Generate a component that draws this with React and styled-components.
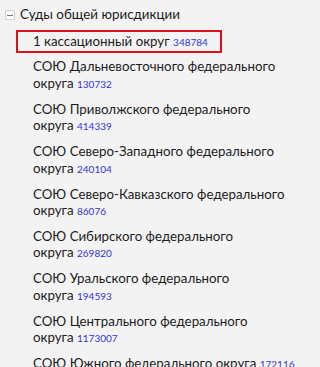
import React from "react";
import styled, { createGlobalStyle } from "styled-components";

const Global = createGlobalStyle`
  html, body { margin: 0; padding: 0; background: #f3f3f3; overflow: hidden; }
  body { font-family: Lato, "Noto Sans", sans-serif; color: #1c1c1c; }
`;

const Tree = styled.div`
  width: 300px;
  height: 367px;
  overflow: hidden;
  box-sizing: border-box;
  padding: 5px 0 0 5px;
`;

const Header = styled.div`
  display: flex;
  align-items: center;
  gap: 5px;
  height: 19px;
`;

const Toggle = styled.span`
  box-sizing: border-box;
  flex: none;
  width: 10px;
  height: 10px;
  margin-top: 1px;
  border: 1px solid #d6d6d6;
  background: #fbfbfb;
  display: flex;
  align-items: center;
  justify-content: center;
  &::before {
    content: "";
    width: 6px;
    height: 1px;
    background: #7a7a7a;
  }
`;

const Title = styled.span`
  font-size: 13.4px;
  line-height: 19px;
  white-space: nowrap;
`;

const List = styled.ul`
  list-style: none;
  margin: 5.5px 0 0 11px;
  padding: 0;
  display: flex;
  flex-direction: column;
  align-items: flex-start;
  gap: 2.4px;
`;

const Item = styled.li`
  box-sizing: border-box;
  width: max-content;
  max-width: 300px;
  flex: none;
  padding: 1px 12px 1px 15px;
  border: 2px solid ${(p) => (p.$selected ? "#d8111b" : "transparent")};
  font-size: 13.3px;
  line-height: 16.5px;
`;

const Tail = styled.span`
  white-space: nowrap;
`;

const Count = styled.span`
  font-size: 10px;
  color: #3434d2;
`;

const courts = [
  { name: "1 кассационный округ", count: "348784", selected: true },
  { name: "СОЮ Дальневосточного федерального округа", count: "130732" },
  { name: "СОЮ Приволжского федерального округа", count: "414339" },
  { name: "СОЮ Северо-Западного федерального округа", count: "240104" },
  { name: "СОЮ Северо-Кавказского федерального округа", count: "86076" },
  { name: "СОЮ Сибирского федерального округа", count: "269820" },
  { name: "СОЮ Уральского федерального округа", count: "194593" },
  { name: "СОЮ Центрального федерального округа", count: "1173007" },
  { name: "СОЮ Южного федерального округа", count: "172116" },
];

function CourtItem({ name, count, selected }) {
  const cut = name.lastIndexOf(" ");
  const head = name.slice(0, cut + 1);
  const last = name.slice(cut + 1);
  return (
    <Item $selected={selected}>
      {head}
      <Tail>
        {last}
        {"\u00a0"}
        <Count>{count}</Count>
      </Tail>
    </Item>
  );
}

export default function App() {
  return (
    <>
      <Global />
      <Tree>
        <Header>
          <Toggle />
          <Title>Суды общей юрисдикции</Title>
        </Header>
        <List>
          {courts.map((c) => (
            <CourtItem key={c.name} {...c} />
          ))}
        </List>
      </Tree>
    </>
  );
}
